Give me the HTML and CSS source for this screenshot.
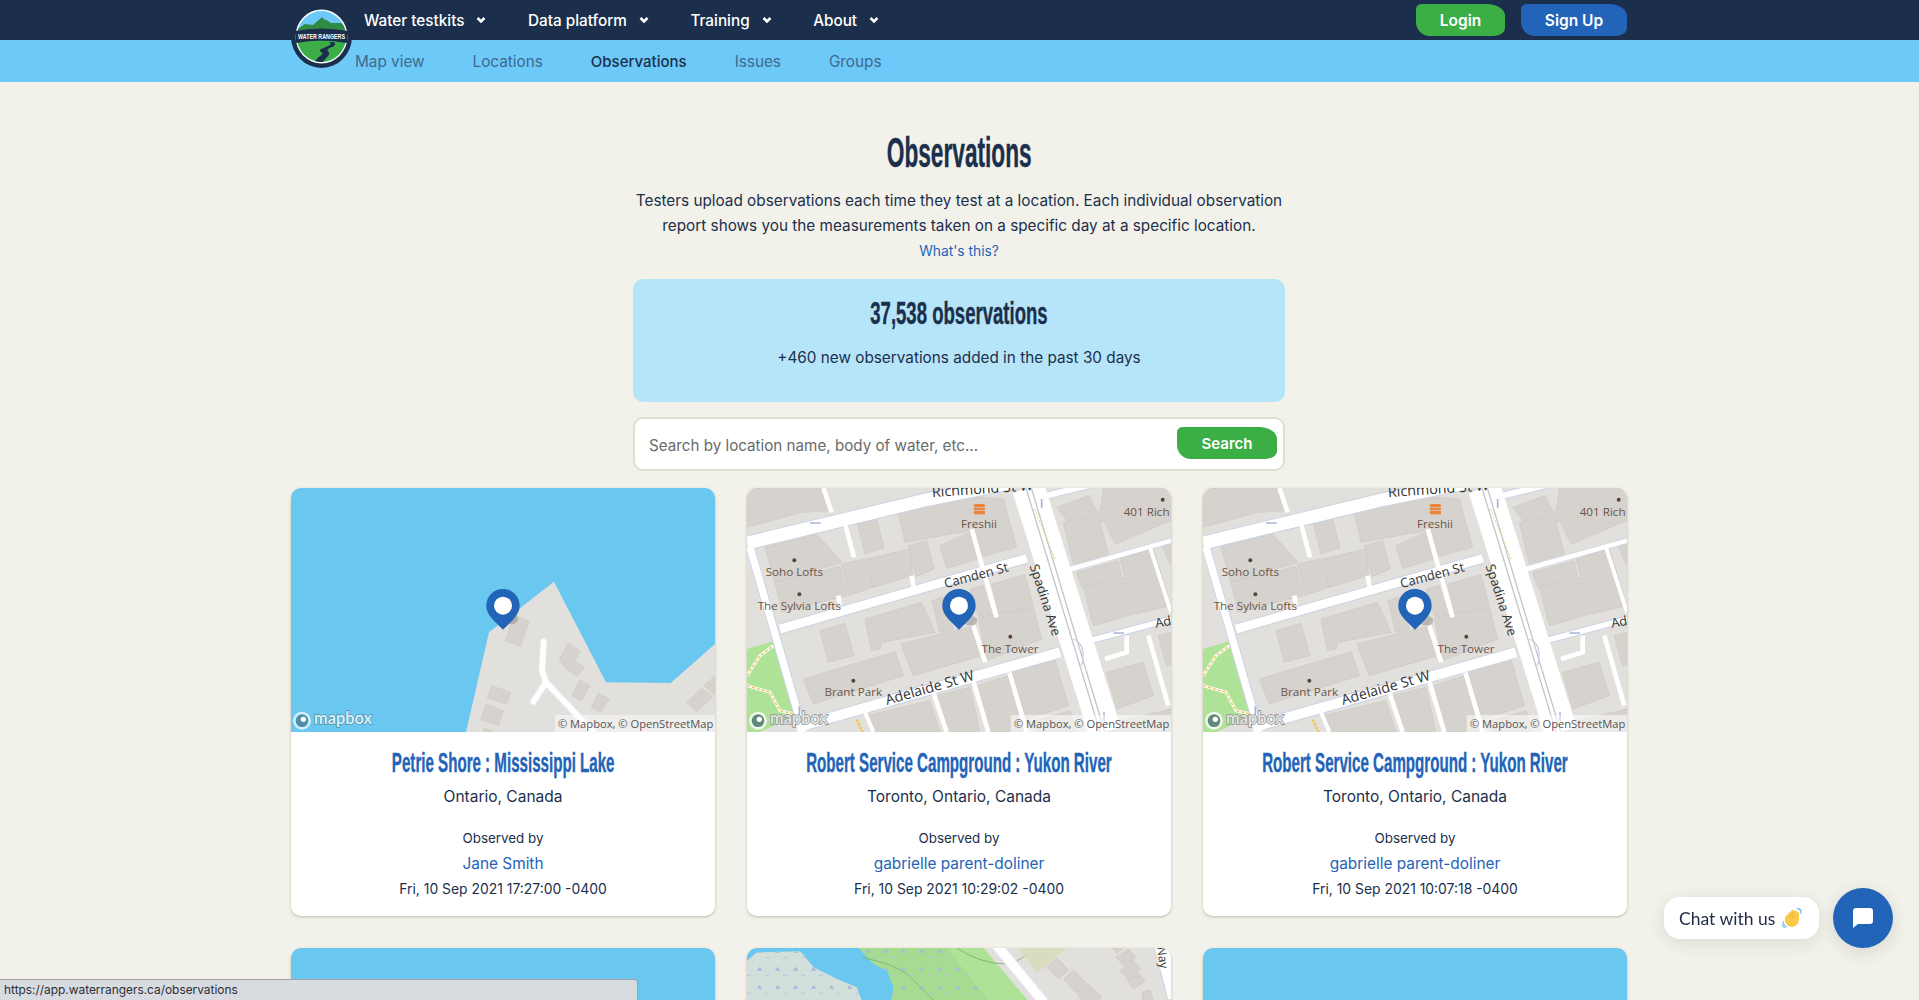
FILE: index.html
```html
<!DOCTYPE html>
<html lang="en">
<head>
    <meta charset="UTF-8">
    <meta name="viewport" content="width=device-width, initial-scale=1.0">
    <title>Water Rangers - Observations</title>
    <link rel="stylesheet" href="styles.css">
</head>
<body>

    <!-- Mapas reutilizados nos cards -->
    <svg class="map-defs" aria-hidden="true">
        <symbol id="mapCity" viewBox="21 27 1272 732">
            <rect x="21" y="27" width="1272" height="732" fill="#e2e0dc"/>
            <g fill="#d6d2cd" stroke="#cbc7c2" stroke-width="2">
                <polygon points="21,27 250,27 275,95 185,100 21,145"/>
                <polygon points="75,205 230,165 305,250 240,270 105,310"/>
                <polygon points="105,310 300,262 320,350 125,400"/>
                <polygon points="305,255 375,240 398,325 325,350"/>
                <polygon points="352,130 410,118 432,205 375,225"/>
                <polygon points="380,240 510,210 518,290 400,325"/>
                <polygon points="505,200 560,185 583,270 528,293"/>
                <polygon points="475,105 650,50 790,60 830,205 705,238 690,155 495,190"/>
                <polygon points="600,200 690,160 712,240 620,268"/>
                <polygon points="375,420 545,370 585,460 425,490 420,510 395,515"/>
                <polygon points="240,455 315,433 342,530 265,550"/>
                <polygon points="190,600 465,518 490,590 220,675"/>
                <polygon points="483,495 700,440 725,530 520,590"/>
                <polygon points="575,365 610,355 640,450 600,460"/>
                <polygon points="755,315 855,287 880,380 778,410"/>
                <polygon points="715,415 880,385 905,480 740,545"/>
                <polygon points="690,330 730,320 755,405 715,410"/>
                <polygon points="590,650 690,625 720,759 620,759"/>
                <polygon points="710,620 805,590 850,759 750,759"/>
                <polygon points="815,575 945,540 985,680 860,720"/>
                <polygon points="380,710 570,665 600,759 400,759"/>
                <polygon points="870,730 990,695 1010,759 890,759"/>
                <polygon points="950,85 1045,50 1090,130 990,135"/>
                <polygon points="970,130 1075,110 1105,225 1000,255"/>
                <polygon points="1080,100 1090,27 1293,27 1293,125 1125,195"/>
                <polygon points="1010,280 1135,245 1145,290 1025,325"/>
                <polygon points="1030,325 1150,295 1180,405 1060,440"/>
                <polygon points="1140,240 1240,210 1293,380 1185,405"/>
                <polygon points="1265,200 1293,195 1293,260"/>
                <polygon points="1100,580 1210,550 1240,650 1130,690"/>
                <polygon points="1255,470 1293,460 1293,555 1280,560"/>
                <polygon points="1090,740 1293,690 1293,759 1100,759"/>
            </g>
            <polygon points="21,510 100,487 170,710 60,759 21,759" fill="#aee296"/>
            <path d="M21 590 L60 530 L100 500 M21 620 L90 640 L120 695 L165 705" fill="none" stroke="#fff" stroke-width="9"/>
            <path d="M21 590 L60 530 L100 500 M21 620 L90 640 L120 695 L165 705" fill="none" stroke="#e8c25a" stroke-width="4" stroke-dasharray="10 5"/>
            <g fill="none" stroke="#ccd3e6">
                <path d="M21 192 L560 62 L830 8" stroke-width="44"/>
                <path d="M920 50 L1120 0" stroke-width="24"/>
                <path d="M120 450 L860 238" stroke-width="32"/>
                <path d="M985 272 L1293 185" stroke-width="18"/>
                <path d="M170 745 L960 520" stroke-width="36"/>
                <path d="M1030 490 L1293 420" stroke-width="22"/>
                <path d="M30 205 L190 759" stroke-width="28"/>
            </g>
            <g fill="none" stroke="#fff">
                <path d="M21 192 L560 62 L830 8" stroke-width="38"/>
                <path d="M920 50 L1120 0" stroke-width="18"/>
                <path d="M120 450 L860 238" stroke-width="26"/>
                <path d="M985 272 L1293 185" stroke-width="14"/>
                <path d="M170 745 L960 520" stroke-width="30"/>
                <path d="M1030 490 L1293 420" stroke-width="16"/>
                <path d="M30 205 L190 759" stroke-width="22"/>
                <path d="M250 27 L275 100 M315 135 L342 235 M515 290 L521 325 M295 350 L300 380" stroke-width="14"/>
                <path d="M695 150 L770 415 M700 440 L736 550 M580 640 L620 759 M698 600 L745 759 M808 580 L860 759" stroke-width="14"/>
                <path d="M1160 470 L1160 520 L1095 540 M1225 470 L1285 680" stroke-width="14"/>
                <path d="M375 700 L400 759 M1230 205 L1293 400" stroke-width="12"/>
            </g>
            <path d="M865 27 L1095 759" fill="none" stroke="#fff" stroke-width="98"/>
            <path d="M858 27 L1080 759 M874 27 L1094 759" fill="none" stroke="#c4c6c8" stroke-width="4"/>
            <path d="M884 90 L945 240" fill="none" stroke="#e6d27a" stroke-width="3" stroke-dasharray="6 6"/>
            <path d="M905 60 v28 M210 132 h32 M1120 462 h32 M178 682 v26 M1092 700 v26" stroke="#a7b6d8" stroke-width="5" fill="none"/>
            <path d="M1000 480 Q1040 495 1025 560" fill="none" stroke="#c9cfe2" stroke-width="4"/>
            <path d="M350 722 L368 759" stroke="#eecb58" stroke-width="8" stroke-dasharray="8 4" fill="none"/>

            <g fill="#5d4438">
                <circle cx="163" cy="244" r="6"/>
                <circle cx="178" cy="346" r="6"/>
                <circle cx="811" cy="473" r="6"/>
                <circle cx="340" cy="605" r="6"/>
                <circle cx="1268" cy="62" r="6"/>
            </g>
            <g fill="#e9843c">
                <rect x="701" y="75" width="34" height="10" rx="5"/>
                <rect x="701" y="87" width="34" height="7"/>
                <rect x="701" y="96" width="34" height="10" rx="4"/>
            </g>
            <g class="map-poi" text-anchor="middle">
                <text x="717" y="146">Freshii</text>
                <text x="163" y="292">Soho Lofts</text>
                <text x="178" y="393">The Sylvia Lofts</text>
                <text x="810" y="521">The Tower</text>
                <text x="340" y="652">Brant Park</text>
                <text x="1220" y="110">401 Rich</text>
            </g>
            <g class="map-street" text-anchor="middle">
                <text class="map-street-big" transform="translate(728 44) rotate(-4)">Richmond St W</text>
                <text transform="translate(712 302) rotate(-15)">Camden St</text>
                <text transform="translate(903 367) rotate(72)">Spadina Ave</text>
                <text class="map-street-big" transform="translate(573 640) rotate(-16)">Adelaide St W</text>
                <text transform="translate(1272 442) rotate(-10)">Ad</text>
            </g>
            <ellipse cx="690" cy="425" rx="22" ry="14" fill="#000" opacity=".18"/>
            <use href="#pinMark" x="607" y="330"/>
            <g class="mapbox-logo">
                <circle cx="54" cy="725" r="27" fill="#fff" opacity=".8"/>
                <circle cx="54" cy="725" r="19" fill="#5f8a7a"/>
                <circle cx="58" cy="721" r="8" fill="#fff"/>
                <text x="90" y="736">mapbox</text>
            </g>
            <rect x="812" y="708" width="481" height="51" fill="#fff" opacity=".55"/>
            <text class="map-attrib" x="1288" y="746" text-anchor="end">© Mapbox, © OpenStreetMap</text>
        </symbol>

        <symbol id="mapShore" viewBox="33 27 1272 732">
            <rect x="33" y="27" width="1272" height="732" fill="#69c7f0"/>
            <polygon points="558,759 627,460 822,308 978,610 1172,612 1305,495 1305,759" fill="#e2e0dc"/>
            <g fill="#d6d2cd" stroke="#cfcbc6" stroke-width="2">
                <polygon points="702,408 748,425 722,502 676,485"/>
                <polygon points="865,492 900,515 885,548 914,565 892,592 858,570 838,540"/>
                <polygon points="900,603 930,620 905,666 875,650"/>
                <polygon points="955,642 988,660 962,700 933,685"/>
                <polygon points="635,620 692,640 680,676 622,658"/>
                <polygon points="618,675 670,695 655,740 602,722"/>
                <polygon points="1265,627 1298,655 1250,698 1220,670"/>
                <polygon points="1305,590 1305,650 1272,620"/>
                <polygon points="612,748 640,756 638,759 610,759"/>
            </g>
            <path d="M791 488 L786 575 L798 610 L940 759 M798 610 L760 668" fill="none" stroke="#eceaf2" stroke-width="22" stroke-linecap="round"/>
            <path d="M791 488 L786 575 L798 610 L940 759 M798 610 L760 668" fill="none" stroke="#fff" stroke-width="16" stroke-linecap="round"/>
            <ellipse cx="690" cy="420" rx="24" ry="16" fill="#000" opacity=".18"/>
            <use href="#pinMark" x="619" y="330"/>
            <g class="mapbox-logo mapbox-logo-water">
                <circle cx="66" cy="725" r="27" fill="#fff" opacity=".7"/>
                <circle cx="66" cy="725" r="19" fill="#4d8fa8"/>
                <circle cx="70" cy="721" r="8" fill="#fff"/>
                <text x="102" y="736">mapbox</text>
            </g>
            <rect x="825" y="708" width="480" height="51" fill="#fff" opacity=".45"/>
            <text class="map-attrib" x="1300" y="746" text-anchor="end">© Mapbox, © OpenStreetMap</text>
        </symbol>

        <symbol id="pinMark" viewBox="0 0 100 122" width="100" height="122" overflow="visible">
            <path d="M50 0 C78 0 100 22 100 50 C100 68 90 80 80 92 L50 122 L20 92 C10 80 0 68 0 50 C0 22 22 0 50 0 Z" fill="#2264b8"/>
            <circle cx="50" cy="50" r="27" fill="#fff"/>
        </symbol>

        <pattern id="wetDots" patternUnits="userSpaceOnUse" width="108" height="54">
            <path d="M30 26 l8 -12 l8 12 Z M84 26 l8 -12 l8 12 Z" fill="#a9b8dc"/>
            <path d="M0 40 h12 M54 40 h12" stroke="#b9c4de" stroke-width="3"/>
        </pattern>
    </svg>

    <header class="topbar">
        <div class="wrap topbar-inner">
            <a href="#" class="logo">
                <svg viewBox="0 0 61 63" width="61" height="63">
                    <ellipse cx="30.5" cy="31.5" rx="30.5" ry="31.5" fill="#1b2f4c"/>
                    <ellipse cx="30.5" cy="31.5" rx="26" ry="27" fill="#fff"/>
                    <clipPath id="logoClip"><ellipse cx="30.5" cy="31.5" rx="24.5" ry="25.5"/></clipPath>
                    <g clip-path="url(#logoClip)">
                        <rect width="61" height="63" fill="#6dc9f7"/>
                        <path d="M0 28 L14 19 L22 20 L31 12 L40 18 L50 18 L61 26 V40 H0 Z" fill="#2f8a44"/>
                        <rect y="36" width="61" height="27" fill="#3cae46"/>
                        <path d="M38 37 C46 41 24 43 30 47 C36 50 22 52 24 60 L32 60 C30 54 42 51 37 46 C33 43 50 41 42 37 Z" fill="#1b2f4c"/>
                    </g>
                    <path d="M4 26 Q30 21 57 26 L56 38 Q30 33 5 38 Z" fill="#1b2f4c"/>
                    <text class="logo-text" x="30.5" y="33.5" text-anchor="middle" textLength="47" lengthAdjust="spacingAndGlyphs">WATER RANGERS</text>
                    <path d="M26 6 L35 15 M35 6 L26 15" stroke="#6dc9f7" stroke-width="1.6"/>
                </svg>
            </a>
            <nav class="main-nav">
                <a href="#">Water testkits<svg class="chevron" viewBox="0 0 10 8"><path d="M1.5 2 L5 5.5 L8.5 2"/></svg></a>
                <a href="#">Data platform<svg class="chevron" viewBox="0 0 10 8"><path d="M1.5 2 L5 5.5 L8.5 2"/></svg></a>
                <a href="#">Training<svg class="chevron" viewBox="0 0 10 8"><path d="M1.5 2 L5 5.5 L8.5 2"/></svg></a>
                <a href="#">About<svg class="chevron" viewBox="0 0 10 8"><path d="M1.5 2 L5 5.5 L8.5 2"/></svg></a>
            </nav>
            <div class="auth">
                <a href="#" class="blob-btn btn-green login-btn">Login</a>
                <a href="#" class="blob-btn btn-blue signup-btn">Sign Up</a>
            </div>
        </div>
    </header>

    <div class="subbar">
        <nav class="wrap sub-nav">
            <a href="#">Map view</a>
            <a href="#">Locations</a>
            <a href="#" class="active">Observations</a>
            <a href="#">Issues</a>
            <a href="#">Groups</a>
        </nav>
    </div>

    <main class="wrap">
        <section class="intro">
            <h1><span class="squeeze">Observations</span></h1>
            <p class="intro-text">Testers upload observations each time they test at a location. Each individual observation report shows you the measurements taken on a specific day at a specific location.</p>
            <a href="#" class="whats-this">What's this?</a>

            <div class="stat-box">
                <h2><span class="squeeze">37,538 observations</span></h2>
                <p>+460 new observations added in the past 30 days</p>
            </div>

            <form class="search-box">
                <input type="text" placeholder="Search by location name, body of water, etc...">
                <button type="button" class="blob-btn btn-green search-btn">Search</button>
            </form>
        </section>

        <section class="cards">
            <article class="card">
                <svg class="card-map"><use href="#mapShore"/></svg>
                <div class="card-body">
                    <h3><a href="#" class="squeeze">Petrie Shore : Mississippi Lake</a></h3>
                    <p class="place">Ontario, Canada</p>
                    <p class="small observed">Observed by</p>
                    <a href="#" class="observer">Jane Smith</a>
                    <p class="small date">Fri, 10 Sep 2021 17:27:00 -0400</p>
                </div>
            </article>
            <article class="card">
                <svg class="card-map"><use href="#mapCity"/></svg>
                <div class="card-body">
                    <h3><a href="#" class="squeeze">Robert Service Campground : Yukon River</a></h3>
                    <p class="place">Toronto, Ontario, Canada</p>
                    <p class="small observed">Observed by</p>
                    <a href="#" class="observer">gabrielle parent-doliner</a>
                    <p class="small date">Fri, 10 Sep 2021 10:29:02 -0400</p>
                </div>
            </article>
            <article class="card">
                <svg class="card-map"><use href="#mapCity"/></svg>
                <div class="card-body">
                    <h3><a href="#" class="squeeze">Robert Service Campground : Yukon River</a></h3>
                    <p class="place">Toronto, Ontario, Canada</p>
                    <p class="small observed">Observed by</p>
                    <a href="#" class="observer">gabrielle parent-doliner</a>
                    <p class="small date">Fri, 10 Sep 2021 10:07:18 -0400</p>
                </div>
            </article>

            <!-- Segunda linha, cortada pela janela -->
            <article class="card">
                <div class="card-water"></div>
            </article>
            <article class="card">
                <svg class="card-map" viewBox="0 12 1272 732">
                    <rect y="12" width="1272" height="732" fill="#e2e0dc"/>
                    <polygon points="0,12 450,12 450,200 0,200" fill="#69c7f0"/>
                    <polygon points="0,50 30,25 160,22 200,70 270,105 330,130 355,200 0,200" fill="#d3dfda"/>
                    <polygon points="0,50 30,25 160,22 200,70 270,105 330,130 355,200 0,200" fill="url(#wetDots)"/>
                    <polygon points="335,12 710,12 860,190 430,190 440,130 420,80 380,60" fill="#aee296"/>
                    <polygon points="335,12 600,12 740,190 430,190 440,130 420,80 380,60" fill="#9fd98e" opacity=".6"/>
                    <polygon points="335,12 600,12 740,190 430,190 440,130 420,80 380,60" fill="url(#wetDots)"/>
                    <path d="M630 12 Q700 60 780 60 Q830 50 855 12 M345 40 Q440 60 480 90 Q520 130 560 170" fill="none" stroke="#85b878" stroke-width="3"/>
                    <polygon points="815,12 960,12 870,88" fill="#d9dcbe"/>
                    <path d="M750 5 L890 175" stroke="#e4e2ef" stroke-width="36" fill="none"/>
                    <path d="M750 5 L890 175" stroke="#fff" stroke-width="28" fill="none"/>
                    <g fill="#d6d2cd" stroke="#cbc7c2" stroke-width="2">
                        <polygon points="900,70 930,42 965,78 935,105"/>
                        <polygon points="950,105 980,78 1015,115 985,145"/>
                        <polygon points="990,145 1020,118 1065,160 1050,175 1005,175"/>
                        <polygon points="1095,12 1125,12 1110,28"/>
                        <polygon points="1108,40 1145,15 1165,40 1130,65"/>
                        <polygon points="1120,80 1155,48 1182,75 1145,108"/>
                        <polygon points="1142,110 1175,88 1195,112 1160,135"/>
                        <polygon points="1185,145 1210,138 1220,175 1190,175"/>
                    </g>
                    <polygon points="1225,12 1272,12 1272,165 1262,165" fill="#fff"/>
                    <path d="M1240 80 L1262 165" stroke="#ccd3e6" stroke-width="3"/>
                    <text class="map-street-small" transform="translate(1230 10) rotate(82)">Nay</text>
                </svg>
            </article>
            <article class="card">
                <div class="card-water"></div>
            </article>
        </section>
    </main>

    <!-- Dica de link do navegador -->
    <div class="status-bar">https://app.waterrangers.ca/observations</div>

    <div class="chat">
        <div class="chat-label">
            Chat with us
            <svg class="wave" viewBox="0 0 20 20" width="20" height="20">
                <path d="M1 13 Q1 17 5 19 M0 16 Q1 19 3 20 M16 1 Q19 2 19 6 M14 0 Q17 0 20 3" stroke="#7fc0ec" stroke-width="1.2" fill="none"/>
                <path d="M3 9 L10 2 Q12 1 12.5 3 L13 3 Q15 2 15.5 4 Q17 4 17 6 L17 12 Q16 18 10 19 Q6 19 3 14 Z" fill="#fbc94a"/>
                <path d="M7 9 L11 5 M9 11 L13 7" stroke="#e59a2b" stroke-width=".8" fill="none"/>
            </svg>
        </div>
        <button type="button" class="chat-btn">
            <svg viewBox="0 0 20 20" width="20" height="20"><path d="M3 0 H17 Q20 0 20 3 V13 Q20 16 17 16 H5 L0 20 V3 Q0 0 3 0 Z" fill="#fff"/></svg>
        </button>
    </div>

</body>
</html>
```

FILE: styles.css
```css
html, body {
    height: 100%;
    overflow: hidden;
}

body {
    margin: 0;
    background-color: #f3f2ea;
    color: #1b2f4c;
    font-family: Inter, "Liberation Sans", sans-serif;
}

a {
    color: inherit;
    text-decoration: none;
}

p, h1, h2, h3 {
    margin: 0;
}

.map-defs {
    position: absolute;
    width: 0;
    height: 0;
}

.wrap {
    width: 1336px;
    margin-left: 291px;
}

/* Barra superior */
.topbar {
    height: 40px;
    background-color: #1b2f4c;
}

.topbar-inner {
    position: relative;
    display: flex;
    align-items: center;
    justify-content: space-between;
    height: 40px;
    padding-left: 73px;
    box-sizing: border-box;
}

.logo {
    position: absolute;
    left: 0;
    top: 5px;
    z-index: 10;
    display: block;
    width: 61px;
    height: 63px;
}

.logo-text {
    font-family: "Liberation Sans", sans-serif;
    font-size: 8px;
    font-weight: bold;
    fill: #fff;
}

.main-nav {
    display: flex;
    gap: 41.5px;
    font-size: 15.3px;
    font-weight: 500;
    color: #fff;
}

.main-nav a {
    display: flex;
    align-items: center;
    gap: 12px;
}

.chevron {
    width: 10px;
    height: 8px;
    fill: none;
    stroke: #fff;
    stroke-width: 2.6;
}

.auth {
    display: flex;
    gap: 16px;
}

.blob-btn {
    display: flex;
    align-items: center;
    justify-content: center;
    height: 32px;
    border: none;
    color: #fff;
    font-family: inherit;
    font-size: 15.5px;
    font-weight: 600;
    border-radius: 6px 18px 12px 14px / 5px 12px 8px 14px;
}

.btn-green {
    background-color: #3cae46;
}

.btn-blue {
    background-color: #2264b8;
}

.login-btn {
    width: 89px;
}

.signup-btn {
    width: 106px;
}

/* Segunda barra */
.subbar {
    height: 42px;
    background-color: #6dc9f7;
}

.sub-nav {
    display: flex;
    align-items: center;
    gap: 48px;
    height: 42px;
    padding-left: 64px;
    box-sizing: border-box;
    font-size: 15.3px;
    color: #3d6a8e;
}

.sub-nav .active {
    color: #1b2f4c;
    font-size: 15px;
    font-weight: 500;
}

/* Titulo e busca */
.intro {
    width: 652px;
    margin: 0 auto;
    text-align: center;
}

.squeeze {
    display: inline-block;
    flex-shrink: 0;
    white-space: nowrap;
    font-family: "Liberation Sans", sans-serif;
    font-weight: bold;
    -webkit-text-stroke: .4px currentColor;
}

h1, .stat-box h2, .card-body h3 {
    display: flex;
    justify-content: center;
    font-weight: normal;
}

h1 {
    margin-top: 48px;
    font-size: 42px;
    line-height: 46px;
}

h1 .squeeze {
    transform: scaleX(.54);
}

.intro-text {
    margin-top: 12px;
    font-size: 15.3px;
    line-height: 25px;
}

.whats-this {
    display: block;
    margin-top: 3px;
    font-size: 13.8px;
    line-height: 20px;
    color: #2264b8;
}

.stat-box {
    box-sizing: border-box;
    height: 123px;
    margin-top: 18px;
    padding-top: 14px;
    border-radius: 10px;
    background-color: #b6e5f9;
}

.stat-box h2 {
    font-size: 32px;
    line-height: 40px;
}

.stat-box h2 .squeeze {
    transform: scaleX(.58);
}

.stat-box p {
    margin-top: 13px;
    font-size: 15.3px;
    line-height: 24px;
}

.search-box {
    display: flex;
    align-items: center;
    justify-content: space-between;
    box-sizing: border-box;
    height: 54px;
    margin-top: 15px;
    padding: 0 6px 0 14px;
    border: 2px solid #e0dfc9;
    border-radius: 10px;
    background-color: #fff;
}

.search-box input {
    flex: 1;
    padding: 2px 0 0;
    border: none;
    outline: none;
    background: none;
    font-family: inherit;
    font-size: 15.2px;
    color: #1b2f4c;
}

.search-box input::placeholder {
    color: #6a6a6a;
}

.search-btn {
    width: 100px;
    margin-bottom: 2px;
    font-size: 15px;
}

/* Cards */
.cards {
    display: grid;
    grid-template-columns: repeat(3, 424px);
    gap: 32px;
    margin-top: 17px;
}

.card {
    overflow: hidden;
    border-radius: 10px;
    background-color: #fff;
    box-shadow: 0 1px 3px rgba(90, 85, 60, .35);
    text-align: center;
}

.card-map {
    display: block;
    width: 424px;
    height: 244px;
}

.card-water {
    height: 244px;
    background-color: #69c7f0;
}

.card-body {
    height: 184px;
    box-sizing: border-box;
    padding-top: 14px;
}

.card-body h3 {
    font-size: 28px;
    line-height: 34px;
    color: #2264b8;
}

.card-body h3 .squeeze {
    transform: scaleX(.54);
}

.place {
    margin-top: 5px;
    font-size: 15.5px;
    line-height: 24px;
}

.small {
    font-size: 13.4px;
    line-height: 20px;
}

.observed {
    margin-top: 19px;
}

.observer {
    display: block;
    margin-top: 4px;
    font-size: 15.4px;
    line-height: 24px;
    color: #2264b8;
}

.date {
    margin-top: 3px;
    font-size: 13.9px;
}

/* Textos dentro dos mapas */
.map-poi {
    font-family: "Open Sans", sans-serif;
    font-size: 35px;
    fill: #6b5548;
}

.map-street {
    font-family: "Open Sans", sans-serif;
    font-size: 39px;
    fill: #333;
}

.map-street .map-street-big {
    font-size: 43px;
}

.map-street-small {
    font-family: "Open Sans", sans-serif;
    font-size: 36px;
    fill: #333;
}

.map-attrib {
    font-family: "Open Sans", sans-serif;
    font-size: 33.5px;
    fill: #555;
}

.mapbox-logo text {
    font-family: Lato, sans-serif;
    font-size: 49px;
    font-weight: bold;
    fill: #dfe3e3;
    stroke: #8a8a8a;
    stroke-width: 4px;
    paint-order: stroke;
}

.mapbox-logo-water text {
    fill: #d8eef8;
    stroke: #4d8fa8;
}

/* Barra de status */
.status-bar {
    position: fixed;
    left: 0;
    bottom: 0;
    width: 638px;
    height: 21px;
    box-sizing: border-box;
    padding: 2px 0 0 4px;
    border-top: 1px solid #9fa3a8;
    border-right: 1px solid #9fa3a8;
    border-top-right-radius: 4px;
    background-color: #d8dbe0;
    font-size: 11.9px;
    color: #2b2f36;
}

/* Chat */
.chat {
    position: fixed;
    right: 26px;
    bottom: 52px;
    display: flex;
    align-items: center;
    gap: 14px;
}

.chat-label {
    display: flex;
    align-items: center;
    gap: 7px;
    box-sizing: border-box;
    width: 155px;
    height: 42px;
    padding-left: 15px;
    border-radius: 16px;
    background-color: #fff;
    box-shadow: 0 4px 18px rgba(0, 0, 0, .1);
    font-family: Lato, sans-serif;
    font-size: 17.5px;
    color: #1f2a44;
}

.chat-btn {
    display: flex;
    align-items: center;
    justify-content: center;
    width: 60px;
    height: 60px;
    padding: 0;
    border: none;
    border-radius: 50%;
    background-color: #2264b8;
    box-shadow: 0 4px 18px rgba(0, 0, 0, .12);
}
```
